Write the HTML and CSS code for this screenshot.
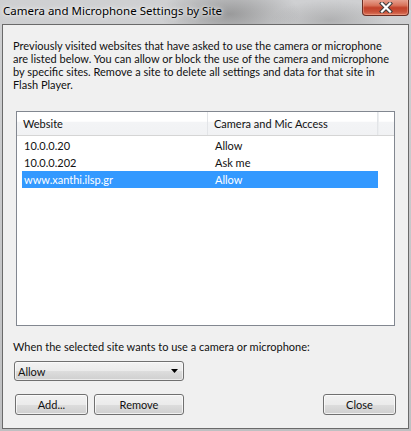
FILE: index.html
```html
<!DOCTYPE html>
<html>
<head>
<meta charset="utf-8">
<link rel="stylesheet" href="styles.css">
</head>
<body>
<div class="window">
  <div class="titlebar">
    <span class="title">Camera and Microphone Settings by Site</span>
    <div class="close">
      <svg width="14" height="11" viewBox="0 0 14 11">
        <path d="M3 1.5 L11 9.5 M11 1.5 L3 9.5" stroke="#3c3c3c" stroke-width="4.2" stroke-linecap="square"/>
        <path d="M3 1.5 L11 9.5 M11 1.5 L3 9.5" stroke="#ffffff" stroke-width="2.2" stroke-linecap="square"/>
      </svg>
    </div>
  </div>
  <div class="client">
    <p class="intro">Previously visited websites that have asked to use the camera or microphone are listed below. You can allow or block the use of the camera and microphone by specific sites. Remove a site to delete all settings and data for that site in Flash Player.</p>
    <div class="list">
      <div class="list-head">
        <div class="hcol c1">Website</div>
        <div class="hcol c2">Camera and Mic Access</div>
        <div class="hcol c3"></div>
      </div>
      <div class="rows">
        <div class="row"><span class="c1">10.0.0.20</span><span class="c2">Allow</span></div>
        <div class="row"><span class="c1">10.0.0.202</span><span class="c2">Ask me</span></div>
        <div class="row selected"><span class="c1">www.xanthi.ilsp.gr</span><span class="c2">Allow</span></div>
      </div>
    </div>
    <div class="label">When the selected site wants to use a camera or microphone:</div>
    <div class="select"><span>Allow</span><svg width="7" height="4" viewBox="0 0 7 4"><path d="M0 0 H7 L3.5 4 Z" fill="#000"/></svg></div>
    <div class="buttons">
      <div class="btn add">Add...</div>
      <div class="btn remove">Remove</div>
      <div class="spacer"></div>
      <div class="btn closebtn">Close</div>
    </div>
  </div>
</div>
</body>
</html>
```
FILE: styles.css
```css
html, body {
  margin: 0;
  padding: 0;
}
body {
  width: 411px;
  height: 431px;
  overflow: hidden;
  font-family: Lato, "Noto Sans", sans-serif;
  font-size: 11px;
  color: #111;
}
.window {
  width: 411px;
  height: 431px;
  display: flex;
  flex-direction: column;
  background:
    radial-gradient(ellipse 70px 30px at 230px 14px, rgba(110,110,110,0.55), rgba(110,110,110,0) 100%),
    radial-gradient(ellipse 60px 20px at 330px 20px, rgba(120,120,120,0.35), rgba(120,120,120,0) 100%),
    linear-gradient(#cfd0d2, #bfc0c2);
}
.titlebar {
  height: 24px;
  position: relative;
  flex: none;
}
.title {
  position: absolute;
  left: 3px;
  top: 3px;
  line-height: 16px;
  font-family: "Noto Sans", sans-serif;
  font-size: 11.5px;
  color: #000;
  text-shadow: 0 0 6px rgba(255,255,255,0.9), 0 0 3px rgba(255,255,255,0.9);
}
.close {
  position: absolute;
  left: 362px;
  top: -1px;
  width: 45px;
  height: 16px;
  border: 1px solid #6b2e24;
  border-top: none;
  border-radius: 0 0 4px 4px;
  background: linear-gradient(#e8a797 0%, #d8735b 40%, #c2412a 55%, #c9523a 80%, #dd7a5f 100%);
  box-shadow: inset 0 0 0 1px rgba(255,200,180,0.35);
  display: flex;
  align-items: center;
  justify-content: center;
}
.client {
  margin: 0 2px 2px 2px;
  flex: 1;
  border: 1px solid #6a6a6a;
  background: #f0f0f0;
  display: flex;
  flex-direction: column;
  padding: 14px 12px 0 10px;
}
.intro {
  margin: 0;
  line-height: 13px;
  width: 382px;
}
.list {
  margin: 20px 1px 0 3px;
  height: 213px;
  border: 1px solid #828790;
  background: #fff;
  flex: none;
}
.list-head {
  display: flex;
  height: 23px;
  border-bottom: 1px solid #d5d5d5;
  background: linear-gradient(#ffffff 0%, #ffffff 40%, #f3f4f6 45%, #f1f2f4 100%);
}
.hcol {
  line-height: 23px;
  padding-left: 6px;
  box-sizing: border-box;
  border-right: 1px solid #e3e5e8;
}
.hcol.c1 { width: 191px; }
.hcol.c2 { width: 170px; }
.hcol.c3 { flex: 1; border-right: none; border-left: 1px solid #eceef0; }
.rows {
  margin-top: 1px;
  padding-left: 5px;
}
.row {
  display: flex;
  height: 17px;
  line-height: 17px;
  width: 356px;
}
.row .c1 { width: 191px; padding-left: 2px; }
.row .c2 { flex: 1; }
.row.selected {
  background: #3399ff;
  color: #fff;
}
.label {
  margin-top: 14px;
  line-height: 13px;
}
.select {
  margin-top: 8px;
  margin-left: 1px;
  height: 18px;
  border: 1px solid #707070;
  border-radius: 3px;
  background: linear-gradient(#f2f2f2 0%, #ebebeb 50%, #dddddd 51%, #cfcfcf 100%);
  box-shadow: inset 0 0 0 1px rgba(255,255,255,0.6);
  display: flex;
  align-items: center;
  justify-content: space-between;
  padding: 0 5px 0 3px;
  width: 160px;
}
.buttons {
  display: flex;
  margin-top: 13px;
  margin-left: 2px;
  gap: 6px;
}
.btn {
  height: 19px;
  border: 1px solid #707070;
  border-radius: 3px;
  background: linear-gradient(#f2f2f2 0%, #ebebeb 50%, #dddddd 51%, #cfcfcf 100%);
  box-shadow: inset 0 0 0 1px rgba(255,255,255,0.7);
  display: flex;
  align-items: center;
  justify-content: center;
}
.btn.add { width: 71px; }
.btn.remove { width: 88px; }
.btn.closebtn { width: 71px; }
.spacer { flex: 1; }
```
